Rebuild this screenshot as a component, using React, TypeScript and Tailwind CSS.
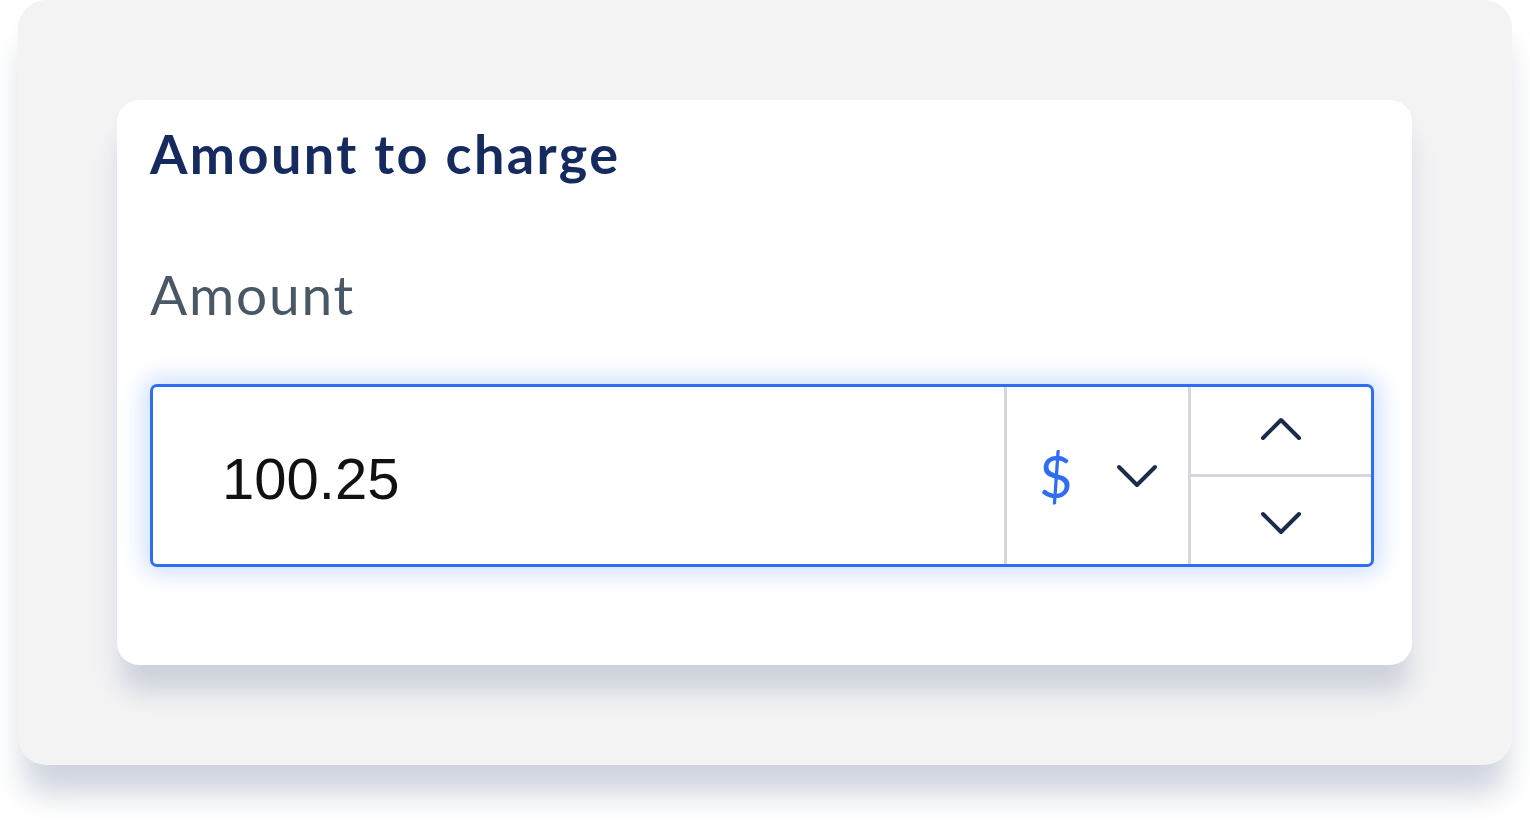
export default function App() {
  return (
    <div className="h-[825px] w-[1530px] bg-white pl-[18px]">
      <div className="h-[765px] w-[1494px] rounded-[28px] bg-[#f3f3f4] pl-[99px] pt-[100px] shadow-[0_34px_30px_-6px_rgba(190,196,210,0.75)]">
        <div className="h-[565px] w-[1295px] rounded-[22px] bg-white pl-[33px] pr-[38px] pt-[22px] shadow-[0_30px_24px_-4px_rgba(196,201,214,0.8)] font-['Lato',sans-serif]">
          <h2 className="text-[54px] font-bold leading-[64px] tracking-[2.4px] text-[#152a5e]">
            Amount to charge
          </h2>
          <p className="mt-[76px] text-[55px] leading-[64px] tracking-[1.8px] text-[#4a5866]">
            Amount
          </p>
          <div className="mt-[58px] flex h-[183px] w-[1224px] rounded-[7px] border-[3px] border-[#2f6df2] bg-white shadow-[0_0_22px_6px_rgba(59,130,246,0.25)]">
            <div className="flex flex-1 items-center pl-[69px] pt-[6px] font-['Liberation_Sans',sans-serif] text-[58px] text-[#111]">
              100.25
            </div>
            <div className="flex w-[184px] items-center border-l-[3px] border-[#d4d7dd] pl-[32px]">
              <span className="font-['Lato',sans-serif] text-[58px] leading-none text-[#2f6df2]">$</span>
              <svg className="ml-[42px]" width="44" height="28" viewBox="0 0 44 28" fill="none">
                <polyline points="4,5 22,23 40,5" stroke="#1c2a4c" strokeWidth="4" strokeLinecap="round" strokeLinejoin="round" />
              </svg>
            </div>
            <div className="flex w-[183px] flex-col border-l-[3px] border-[#d4d7dd]">
              <div className="flex flex-1 items-center justify-center border-b-[3px] border-[#d4d7dd] pb-[4px]">
                <svg width="44" height="28" viewBox="0 0 44 28" fill="none">
                  <polyline points="4,23 22,5 40,23" stroke="#1c2a4c" strokeWidth="4" strokeLinecap="round" strokeLinejoin="round" />
                </svg>
              </div>
              <div className="flex flex-1 items-center justify-center pt-[4px]">
                <svg width="44" height="28" viewBox="0 0 44 28" fill="none">
                  <polyline points="4,5 22,23 40,5" stroke="#1c2a4c" strokeWidth="4" strokeLinecap="round" strokeLinejoin="round" />
                </svg>
              </div>
            </div>
          </div>
        </div>
      </div>
    </div>
  );
}
